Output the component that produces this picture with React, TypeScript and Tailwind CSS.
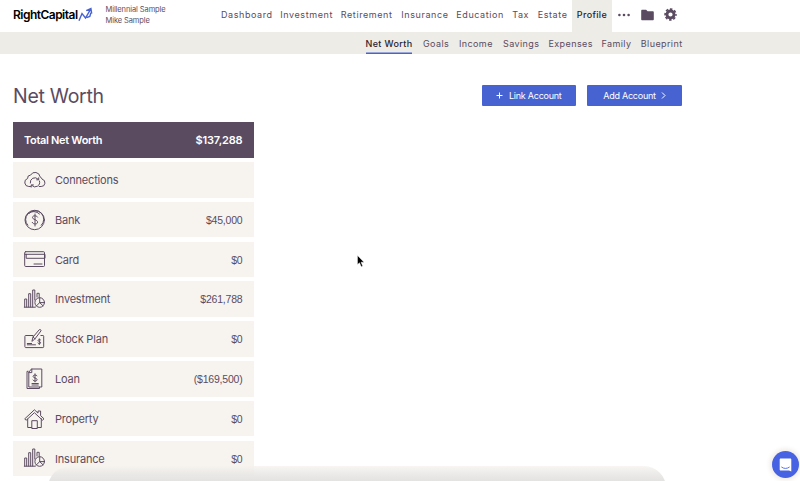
import type { ReactNode } from 'react';

const mainNav = [
  { label: 'Dashboard', width: 'w-[59.3px]' },
  { label: 'Investment', width: 'w-[60.5px]' },
  { label: 'Retirement', width: 'w-[60.5px]' },
  { label: 'Insurance', width: 'w-[55px]' },
  { label: 'Education', width: 'w-[55.9px]' },
  { label: 'Tax', width: 'w-[25.5px]' },
  { label: 'Estate', width: 'w-[34.3px]' },
];

const subNav = [
  { label: 'Goals', width: 'w-[36px]' },
  { label: 'Income', width: 'w-[44px]' },
  { label: 'Savings', width: 'w-[45.5px]' },
  { label: 'Expenses', width: 'w-[53px]' },
  { label: 'Family', width: 'w-[39.3px]' },
  { label: 'Blueprint', width: 'w-[41px]' },
];

const LineIcon = ({ children }: { children: ReactNode }) => (
  <svg className="w-[22px] h-[22px] shrink-0 overflow-visible" viewBox="0 0 22 22" fill="none" stroke="currentColor" strokeWidth="1" strokeLinecap="round" strokeLinejoin="round">
    {children}
  </svg>
);

const CloudIcon = () => (
  <LineIcon>
    <path d="M6.5 17.5H4.8a4.1 4.1 0 0 1-1.2-8 3.1 3.1 0 0 1 3-3.4A5 5 0 0 1 16 7.8a3.5 3.5 0 0 1 2.1 2.4 3.7 3.7 0 0 1-.9 7.3h-2" />
    <path d="M6.3 14a4.6 4.6 0 0 1 7.8-3.9M15.5 12a4.6 4.6 0 0 1-7.7 4.5M14.7 8.8v2h-2M7.2 18.1v-2.2h2.2" />
  </LineIcon>
);

const BankIcon = () => (
  <LineIcon>
    <circle cx="10.7" cy="11" r="9.7" />
    <path d="M5.2 4.2A8.4 8.4 0 0 1 17.3 16.3M3.8 16.2A7.7 7.7 0 0 1 15.5 5" />
    <path d="M13.6 8c-.5-1.3-4.8-2-5.1.3-.3 2.4 5.1 2.2 5.1 4.9 0 2.4-4.7 2.4-5.4.2M11 5v12" />
  </LineIcon>
);

const CardIcon = () => (
  <LineIcon>
    <rect x=".7" y="3.7" width="19.8" height="14.8" rx="1" />
    <path d="M1 6.3h20v4H2.2V6.3M10 16h8" />
  </LineIcon>
);

const ChartIcon = () => (
  <LineIcon>
    <path d="M.7 19V11h2v8M4.7 19V5.7h2V19M8.7 19V2h2.1v10M13 9V5.3h2.2V9M.3 19.2h11" />
    <circle cx="15.7" cy="14.5" r="4.8" />
    <path d="M15.7 9.8v4.8h4.8M15.7 14.6l-3.5 3.5M15.7 14.6l3.3 3.2" />
  </LineIcon>
);

const StockIcon = () => (
  <LineIcon>
    <path d="M9 7.5H1.7a.8.8 0 0 0-.8.8v10.5c0 .5.4.8.8.8h17.2c.5 0 .8-.3.8-.8V8.3a.8.8 0 0 0-.8-.8h-2" />
    <path d="m8 13 1-4 6.3-7.3c.8-.7 2.2.4 1.6 1.3L11 10.8zM9 9l2 1.8M3.3 15.5h4.3M3.3 16.8h8.2" />
    <path d="M16.6 11.9c-.8-1-2.8-.3-2.5.8.3 1 2.5.7 2.5 2s-2 1.4-2.7.4M15.3 10.8v5.7" />
  </LineIcon>
);

const LoanIcon = () => (
  <LineIcon>
    <path d="M4.2 3.3H3v17.2h12.5v-1.3M7.8 1h10v18H4.8V4.6zM7.8 1v3.6H4.8" />
    <path d="M13 7.7c-.7-1.2-4-1-3.9.8.1 1.8 4 1.2 4 3.2 0 1.8-3.4 1.9-4.2.4M11 5.8v8M8 15.5h6.3M8 17h6.3" />
  </LineIcon>
);

const HouseIcon = () => (
  <LineIcon>
    <path d="M3.7 11.2v8.3h4.1v-6.8h5.5v6.8h4V10.7M7.8 19.5v1h5.5v-1" />
    <path d="m1 10.6 9.4-8.8 3.6 3.3V3h2.6v4.7l3.4 3.1-1.5 1.4-8.1-7.5-8 7.3z" />
  </LineIcon>
);

const accounts = [
  { name: 'Connections', value: '', Icon: CloudIcon },
  { name: 'Bank', value: '$45,000', Icon: BankIcon },
  { name: 'Card', value: '$0', Icon: CardIcon },
  { name: 'Investment', value: '$261,788', Icon: ChartIcon },
  { name: 'Stock Plan', value: '$0', Icon: StockIcon },
  { name: 'Loan', value: '($169,500)', Icon: LoanIcon },
  { name: 'Property', value: '$0', Icon: HouseIcon },
  { name: 'Insurance', value: '$0', Icon: ChartIcon },
];

const Header = () => (
  <header className="flex h-8 text-[#5a4b61]">
    <div className="flex w-[221px] pl-[13px] shrink-0">
      <div className="flex w-[92.5px] pt-[7px] text-black">
        <span className="w-[65px] whitespace-nowrap text-[12px] leading-4 font-semibold tracking-[-0.52px]">RightCapital</span>
        <svg className="w-[15px] h-[15px]" viewBox="0 0 15 15" fill="none" stroke="#4763d2" strokeWidth="1.4">
          <path d="m1 13.8 3-7.2 3.5 4.4 5-8.7M8.2 3.6l4.7-2 .8 5M8.6 10.7l3.2-1.2 1.1-3.7" />
        </svg>
      </div>
      <div className="pt-[4px] text-[7.5px] leading-[11px] tracking-[-0.1px] whitespace-nowrap">
        <p>Millennial Sample</p>
        <p>Mike Sample</p>
      </div>
    </div>
    <nav className="flex items-center text-[9px] tracking-[0.58px] pb-[2px]">
      {mainNav.map((item) => (
        <a key={item.label} className={`${item.width} shrink-0 whitespace-nowrap`}>{item.label}</a>
      ))}
    </nav>
    <a className="flex w-10 items-center justify-center bg-[#edece7] pb-[2px] text-[9px] font-medium tracking-[0.35px] text-[#29222d]">Profile</a>
    <div className="flex items-center pl-[6px] pb-[3px]">
      <svg className="w-3 h-3 mr-[11px]" viewBox="0 0 12 12" fill="currentColor">
        <circle cx="1.4" cy="6" r="1.3" /><circle cx="6" cy="6" r="1.3" /><circle cx="10.6" cy="6" r="1.3" />
      </svg>
      <svg className="w-[13px] h-[12px] mr-[10px]" viewBox="0 0 13 12" fill="currentColor">
        <path d="M1.3.7h3.8l1.5 1.6h5.1c.7 0 1.1.5 1.1 1.1v6.8c0 .7-.4 1.1-1.1 1.1H1.3c-.7 0-1.1-.4-1.1-1.1V1.8C.2 1.1.6.7 1.3.7Z" />
      </svg>
      <svg className="w-[13px] h-[13px]" viewBox="0 0 13 13" fill="none" stroke="currentColor">
        <circle cx="6.5" cy="6.5" r="3.5" strokeWidth="2.8" />
        <circle cx="6.5" cy="6.5" r="5.4" strokeWidth="1.7" strokeDasharray="2.5 1.741" strokeDashoffset="1.25" />
      </svg>
    </div>
  </header>
);

const AccountList = () => (
  <section className="w-[240.5px] text-[#5a4b61]">
    <div className="flex h-[35.5px] items-center justify-between bg-[#5a4b61] px-[11px] text-[11px] font-semibold text-white">
      <span className="tracking-[-0.32px]">Total Net Worth</span>
      <span className="tracking-[-0.15px]">$137,288</span>
    </div>
    <ul className="flex flex-col gap-[4.3px] pt-[4.2px]">
      {accounts.map(({ name, value, Icon }) => (
        <li key={name} className="flex h-[35.5px] shrink-0 items-center bg-[#f7f4f0] pl-[11px] pr-[11px] text-[11px]">
          <Icon />
          <span className="ml-[9px] pt-px tracking-[-0.2px]">{name}</span>
          <span className="ml-auto pt-[2px] font-['Liberation_Sans',sans-serif] text-[10.5px] tracking-[-0.2px]">{value}</span>
        </li>
      ))}
    </ul>
  </section>
);

export default function App() {
  return (
    <div className="relative h-[481px] w-[800px] overflow-hidden bg-white font-[Inter,sans-serif]">
      <Header />
      <nav className="flex h-[22px] bg-[#edece7] pl-[365.5px] text-[9px] tracking-[0.4px] text-[#5a4b61]">
        <a className="mr-[11px] flex w-[46.5px] shrink-0 items-center whitespace-nowrap pt-px font-medium tracking-[0.36px] text-[#29222d] shadow-[inset_0_-1.5px_0_#4763d2]">Net Worth</a>
        {subNav.map((item) => (
          <a key={item.label} className={`${item.width} flex shrink-0 items-center whitespace-nowrap pt-px`}>{item.label}</a>
        ))}
      </nav>
      <main className="pl-[13px]">
        <div className="flex h-[68.4px] w-[669px] items-start pt-[30px]">
          <h1 className="text-[19.5px] leading-6 tracking-[-0.3px] text-[#5a4b61]">Net Worth</h1>
          <div className="ml-auto flex gap-[11px] pt-[0.6px] text-[9px] tracking-[-0.25px] text-white">
            <button className="flex h-[21px] w-[94.5px] items-center justify-center rounded-[1px] bg-[#4763d2] pt-px whitespace-nowrap">
              <svg className="w-[7px] h-[7px] mr-[6px]" viewBox="0 0 7 7" stroke="currentColor"><path d="M3.5.5v6M.5 3.5h6" /></svg>
              Link Account
            </button>
            <button className="flex h-[21px] w-[95px] items-center justify-center rounded-[1px] bg-[#4763d2] pt-px whitespace-nowrap">
              Add Account
              <svg className="w-[5px] h-[7px] ml-[5px]" viewBox="0 0 5 7" fill="none" stroke="currentColor"><path d="m1 .5 3 3-3 3" /></svg>
            </button>
          </div>
        </div>
        <AccountList />
      </main>

      {/* soft dock shadow along the bottom edge */}
      <div className="absolute left-[48px] top-[466px] h-[22px] w-[618px] rounded-t-[30px] bg-gradient-to-b from-[#f6f3ef]/80 via-[#e5e4e3]/90 to-[#dcdcdc]" />

      <svg className="absolute left-[357px] top-[255px] w-[8px] h-[13px]" viewBox="0 0 8 13">
        <path d="M.5.5v9l2-1.8 1.8 4 1.4-.6L4 7.2h3z" fill="#000" stroke="#fff" strokeWidth=".4" />
      </svg>

      <button className="absolute left-[771.5px] top-[451px] flex h-[27px] w-[27px] items-center justify-center rounded-full bg-[#4763e3] shadow-[0_0_5px_2px_#eeeae5]">
        <svg className="w-[13px] h-[14px]" viewBox="0 0 13 14">
          <path d="M1.8.5h9.4c.7 0 1.1.4 1.1 1.1v12l-2.3-1H1.8c-.7 0-1.1-.4-1.1-1.1V1.6C.7.9 1.1.5 1.8.5Z" fill="#fff" />
          <path d="M2.7 9.2c2.2 1.7 5.4 1.7 7.6 0" fill="none" stroke="#4763e3" strokeWidth=".9" strokeLinecap="round" />
        </svg>
      </button>
    </div>
  );
}
